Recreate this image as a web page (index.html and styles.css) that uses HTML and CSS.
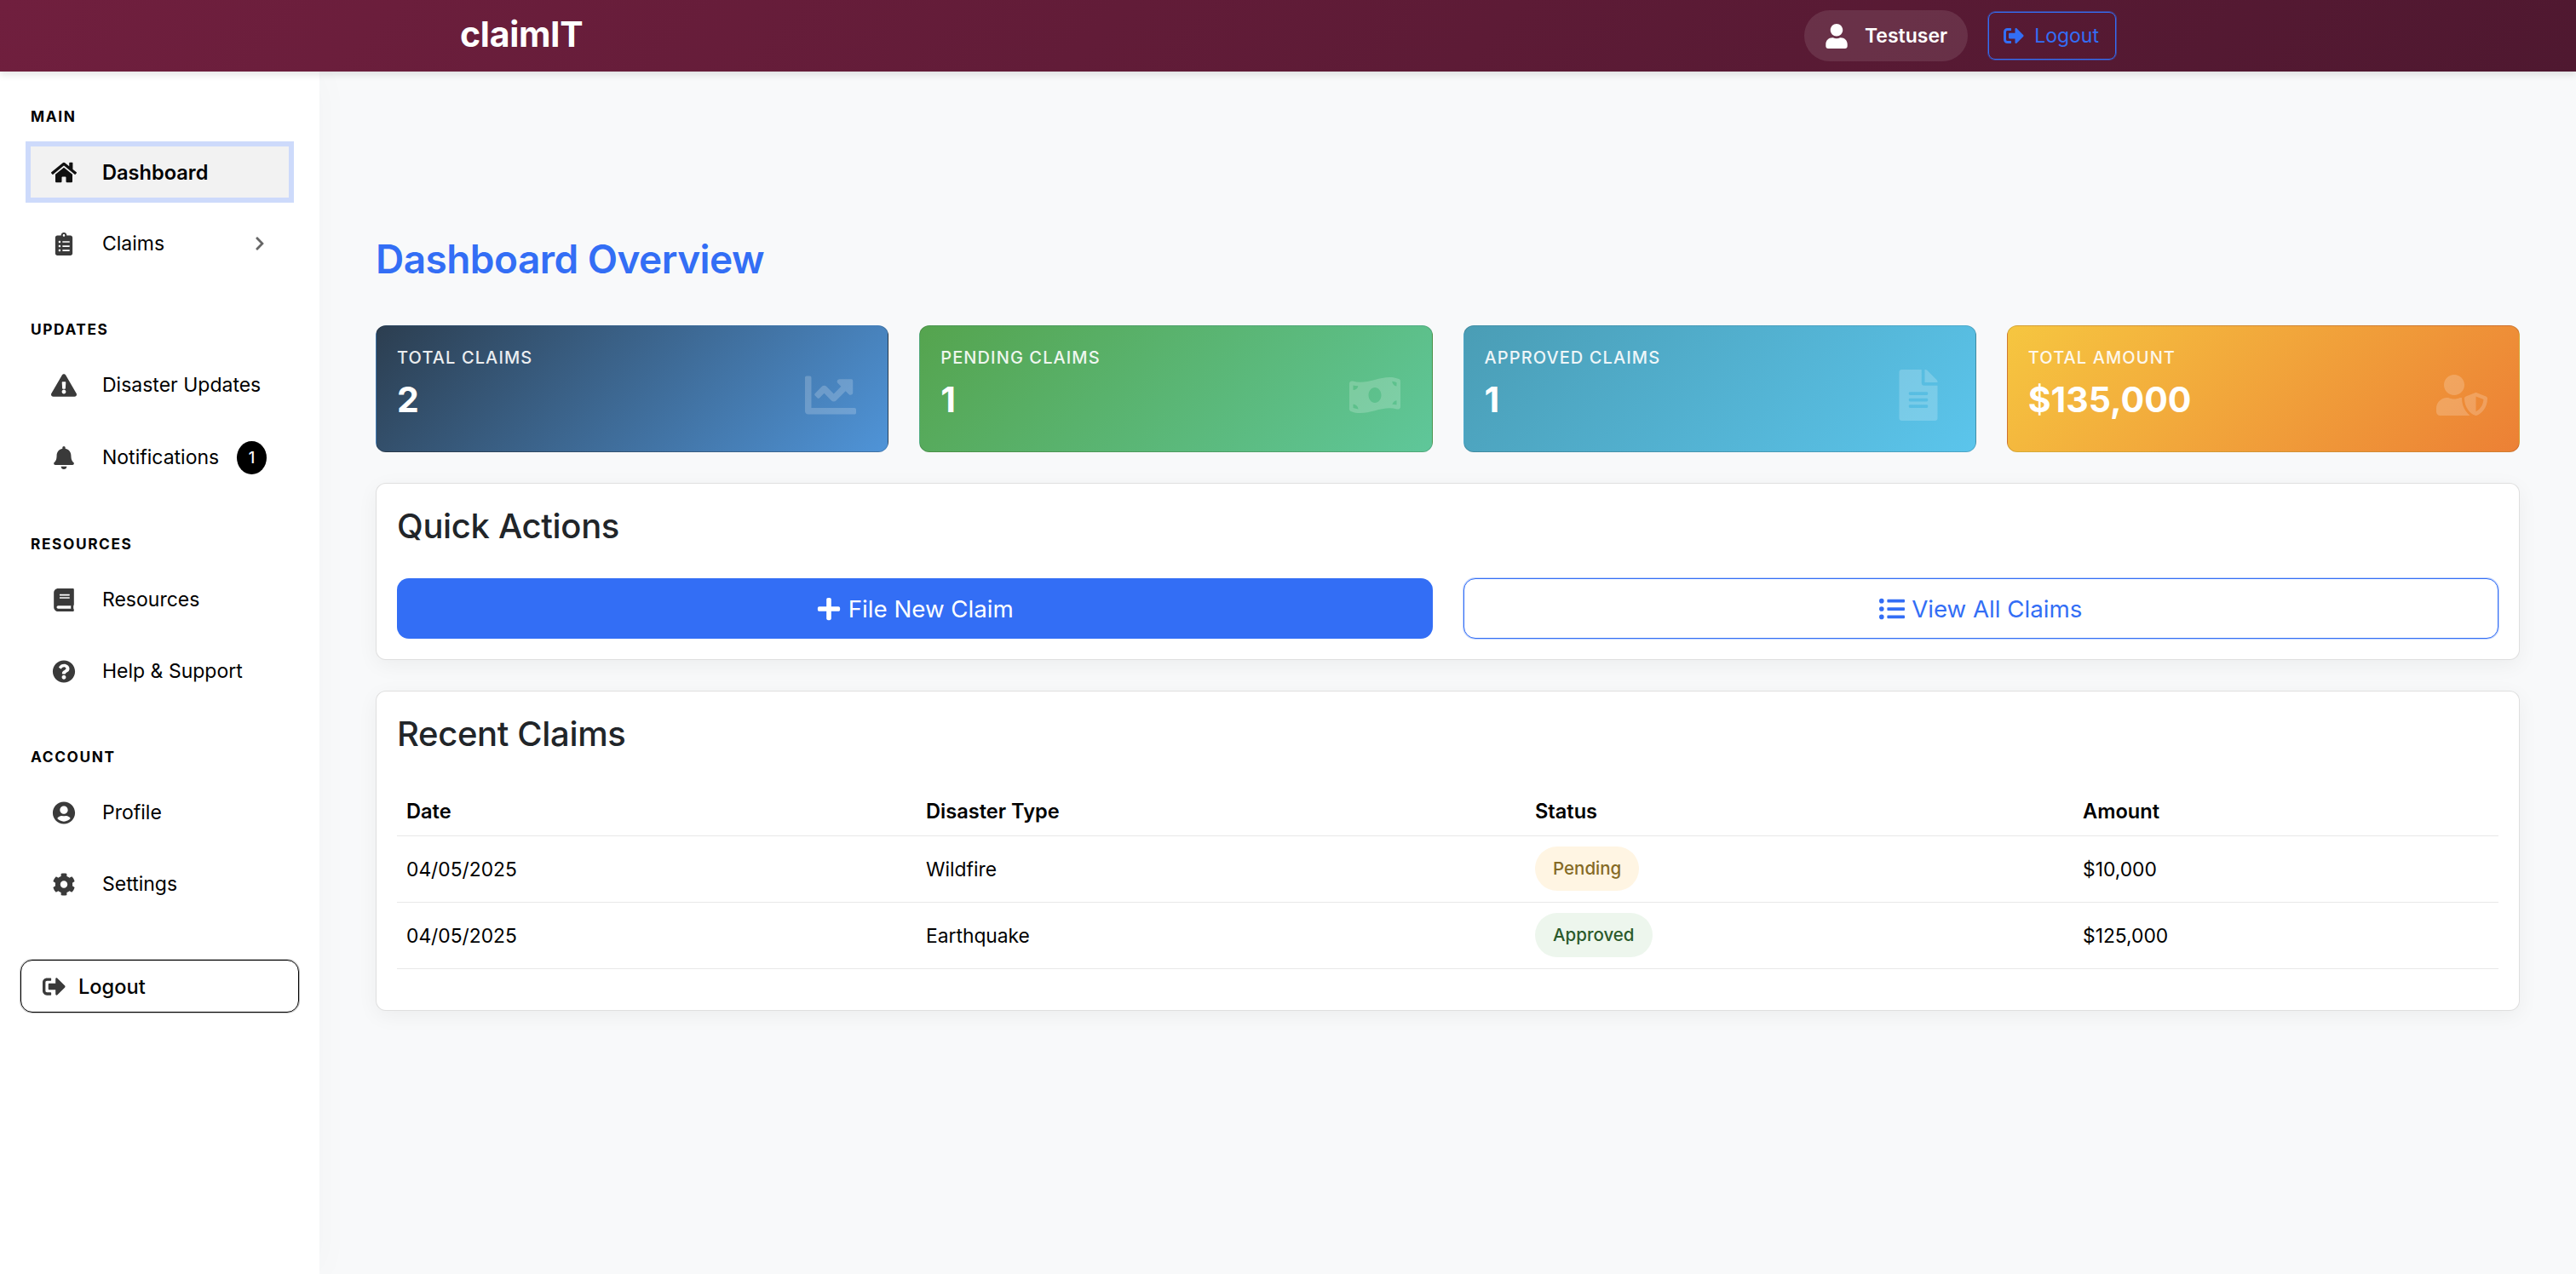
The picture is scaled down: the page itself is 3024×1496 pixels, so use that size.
FILE: index.html
```html
<!DOCTYPE html>
<html lang="en">
<head>
<meta charset="UTF-8">
<meta name="viewport" content="width=device-width, initial-scale=1.0">
<title>claimIT - Dashboard</title>
<link rel="stylesheet" href="styles.css">
</head>
<body>

<header class="topbar">
    <a class="brand">claimIT</a>
    <div class="topbar-right">
        <div class="user-pill">
            <svg class="user-icon" viewBox="0 0 448 512"><path d="M224 256c70.7 0 128-57.3 128-128S294.7 0 224 0 96 57.3 96 128s57.3 128 128 128zm89.6 32h-16.7c-22.2 10.2-46.9 16-72.9 16s-50.6-5.8-72.9-16h-16.7C60.2 288 0 348.2 0 422.4V464c0 26.5 21.5 48 48 48h352c26.5 0 48-21.5 48-48v-41.6c0-74.2-60.2-134.4-134.4-134.4z"/></svg>
            <span>Testuser</span>
        </div>
        <a class="top-logout">
            <svg class="top-logout-icon" viewBox="0 0 512 512"><path d="M497 273L329 441c-15 15-41 4.5-41-17v-96H152c-13.3 0-24-10.7-24-24v-96c0-13.3 10.7-24 24-24h136V88c0-21.4 25.9-32 41-17l168 168c9.3 9.4 9.3 24.6 0 34zM192 436v-40c0-6.6-5.4-12-12-12H96c-17.7 0-32-14.3-32-32V160c0-17.7 14.3-32 32-32h84c6.6 0 12-5.4 12-12V76c0-6.6-5.4-12-12-12H96c-53 0-96 43-96 96v192c0 53 43 96 96 96h84c6.6 0 12-5.4 12-12z"/></svg>
            <span>Logout</span>
        </a>
    </div>
</header>

<div class="layout">
    <aside class="sidebar">
        <section class="side-section">
            <h6 class="side-label">MAIN</h6>
            <a class="nav-item active">
                <svg class="nav-icon" viewBox="0 0 576 512"><path d="M280.37 148.26L96 300.11V464a16 16 0 0 0 16 16l112.06-.29a16 16 0 0 0 15.92-16V368a16 16 0 0 1 16-16h64a16 16 0 0 1 16 16v95.64a16 16 0 0 0 16 16.05L464 480a16 16 0 0 0 16-16V300L295.67 148.26a12.19 12.19 0 0 0-15.3 0zM571.6 251.47L488 182.56V44.05a12 12 0 0 0-12-12h-56a12 12 0 0 0-12 12v72.61L318.47 43a48 48 0 0 0-61 0L4.34 251.47a12 12 0 0 0-1.6 16.9l25.5 31A12 12 0 0 0 45.15 301l235.22-193.74a12.19 12.19 0 0 1 15.3 0L530.9 301a12 12 0 0 0 16.9-1.6l25.5-31a12 12 0 0 0-1.7-16.93z"/></svg>
                <span>Dashboard</span>
            </a>
            <a class="nav-item">
                <svg class="nav-icon" viewBox="0 0 384 512"><path d="M336 64h-80c0-35.3-28.7-64-64-64s-64 28.7-64 64H48C21.5 64 0 85.5 0 112v352c0 26.5 21.5 48 48 48h288c26.5 0 48-21.5 48-48V112c0-26.5-21.5-48-48-48zM96 424c-13.3 0-24-10.7-24-24s10.7-24 24-24 24 10.7 24 24-10.7 24-24 24zm0-96c-13.3 0-24-10.7-24-24s10.7-24 24-24 24 10.7 24 24-10.7 24-24 24zm0-96c-13.3 0-24-10.7-24-24s10.7-24 24-24 24 10.7 24 24-10.7 24-24 24zm96-192c13.3 0 24 10.7 24 24s-10.7 24-24 24-24-10.7-24-24 10.7-24 24-24zm128 368c0 4.4-3.6 8-8 8H168c-4.4 0-8-3.6-8-8v-16c0-4.4 3.6-8 8-8h144c4.4 0 8 3.6 8 8v16zm0-96c0 4.4-3.6 8-8 8H168c-4.4 0-8-3.6-8-8v-16c0-4.4 3.6-8 8-8h144c4.4 0 8 3.6 8 8v16zm0-96c0 4.4-3.6 8-8 8H168c-4.4 0-8-3.6-8-8v-16c0-4.4 3.6-8 8-8h144c4.4 0 8 3.6 8 8v16z"/></svg>
                <span>Claims</span>
                <svg class="chevron" viewBox="0 0 320 512"><path d="M285.476 272.971L91.132 467.314c-9.373 9.373-24.569 9.373-33.941 0l-22.667-22.667c-9.357-9.357-9.375-24.522-.04-33.901L188.505 256 34.484 101.255c-9.335-9.379-9.317-24.544.04-33.901l22.667-22.667c9.373-9.373 24.569-9.373 33.941 0L285.475 239.03c9.373 9.372 9.373 24.568.001 33.941z"/></svg>
            </a>
        </section>

        <section class="side-section">
            <h6 class="side-label">UPDATES</h6>
            <a class="nav-item">
                <svg class="nav-icon" viewBox="0 0 576 512"><path d="M569.517 440.013C587.975 472.007 564.806 512 527.94 512H48.054c-36.937 0-59.999-40.055-41.577-71.987L246.423 23.985c18.467-32.009 64.72-31.951 83.154 0l239.94 416.028zM288 354c-25.405 0-46 20.595-46 46s20.595 46 46 46 46-20.595 46-46-20.595-46-46-46zm-43.673-165.346l7.418 136c.347 6.364 5.609 11.346 11.982 11.346h48.546c6.373 0 11.635-4.982 11.982-11.346l7.418-136c.375-6.874-5.098-12.654-11.982-12.654h-63.383c-6.884 0-12.356 5.78-11.981 12.654z"/></svg>
                <span>Disaster Updates</span>
            </a>
            <a class="nav-item nav-item-badge">
                <svg class="nav-icon" viewBox="0 0 448 512"><path d="M224 512c35.32 0 63.97-28.65 63.97-64H160.03c0 35.35 28.65 64 63.97 64zm215.39-149.71c-19.32-20.76-55.47-51.99-55.47-154.29 0-77.7-54.48-139.9-127.94-155.16V32c0-17.67-14.32-32-31.98-32s-31.98 14.33-31.98 32v20.84C118.56 68.1 64.08 130.3 64.08 208c0 102.3-36.15 133.53-55.47 154.29-6 6.45-8.66 14.16-8.61 21.71.11 16.4 12.98 32 32.1 32h383.8c19.12 0 32-15.6 32.1-32 .05-7.55-2.61-15.27-8.61-21.71z"/></svg>
                <span>Notifications</span>
                <span class="nav-badge">1</span>
            </a>
        </section>

        <section class="side-section">
            <h6 class="side-label">RESOURCES</h6>
            <a class="nav-item">
                <svg class="nav-icon" viewBox="0 0 448 512"><path d="M448 360V24c0-13.3-10.7-24-24-24H96C43 0 0 43 0 96v320c0 53 43 96 96 96h328c13.3 0 24-10.7 24-24v-16c0-7.5-3.5-14.3-8.9-18.7-4.2-15.4-4.2-59.3 0-74.7 5.4-4.3 8.9-11.1 8.9-18.6zM128 134c0-3.3 2.7-6 6-6h212c3.3 0 6 2.7 6 6v20c0 3.3-2.7 6-6 6H134c-3.3 0-6-2.7-6-6v-20zm0 64c0-3.3 2.7-6 6-6h212c3.3 0 6 2.7 6 6v20c0 3.3-2.7 6-6 6H134c-3.3 0-6-2.7-6-6v-20zm253.4 250H96c-17.7 0-32-14.3-32-32 0-17.6 14.4-32 32-32h285.4c-1.9 17.1-1.9 46.9 0 64z"/></svg>
                <span>Resources</span>
            </a>
            <a class="nav-item">
                <svg class="nav-icon" viewBox="0 0 512 512"><path d="M504 256c0 136.997-111.043 248-248 248S8 392.997 8 256C8 119.083 119.043 8 256 8s248 111.083 248 248zM262.655 90c-54.497 0-89.255 22.957-116.549 63.758-3.536 5.286-2.353 12.415 2.715 16.258l34.699 26.31c5.205 3.947 12.621 3.008 16.665-2.122 17.864-22.658 30.113-35.797 57.303-35.797 20.429 0 45.698 13.148 45.698 32.958 0 14.976-12.363 22.667-32.534 33.976C247.128 238.528 216 254.941 216 296v4c0 6.627 5.373 12 12 12h56c6.627 0 12-5.373 12-12v-1.333c0-28.462 83.186-29.647 83.186-106.667 0-58.002-60.165-102-116.531-102zM256 338c-25.365 0-46 20.635-46 46 0 25.364 20.635 46 46 46s46-20.636 46-46c0-25.365-20.635-46-46-46z"/></svg>
                <span>Help &amp; Support</span>
            </a>
        </section>

        <section class="side-section">
            <h6 class="side-label">ACCOUNT</h6>
            <a class="nav-item">
                <svg class="nav-icon" viewBox="0 0 496 512"><path d="M248 8C111 8 0 119 0 256s111 248 248 248 248-111 248-248S385 8 248 8zm0 96c48.6 0 88 39.4 88 88s-39.4 88-88 88-88-39.4-88-88 39.4-88 88-88zm0 344c-58.7 0-111.3-26.6-146.5-68.2 18.8-35.4 55.6-59.8 98.5-59.8 2.4 0 4.8.4 7.1 1.1 13 4.2 26.6 6.9 40.9 6.9 14.3 0 28-2.7 40.9-6.9 2.3-.7 4.7-1.1 7.1-1.1 42.9 0 79.7 24.4 98.5 59.8C359.3 421.4 306.7 448 248 448z"/></svg>
                <span>Profile</span>
            </a>
            <a class="nav-item">
                <svg class="nav-icon" viewBox="0 0 512 512"><path d="M487.4 315.7l-42.6-24.6c4.3-23.2 4.3-47 0-70.2l42.6-24.6c4.9-2.8 7.1-8.6 5.5-14-11.1-35.6-30-67.8-54.7-94.6-3.8-4.1-10-5.1-14.8-2.3L380.8 110c-17.9-15.4-38.5-27.3-60.8-35.1V25.8c0-5.6-3.9-10.5-9.4-11.7-36.7-8.2-74.3-7.8-109.2 0-5.5 1.2-9.4 6.1-9.4 11.7V75c-22.2 7.9-42.8 19.8-60.8 35.1L88.7 85.5c-4.9-2.8-11-1.9-14.8 2.3-24.7 26.7-43.6 58.9-54.7 94.6-1.7 5.4.6 11.2 5.5 14L67.3 221c-4.3 23.2-4.3 47 0 70.2l-42.6 24.6c-4.9 2.8-7.1 8.6-5.5 14 11.1 35.6 30 67.8 54.7 94.6 3.8 4.1 10 5.1 14.8 2.3l42.6-24.6c17.9 15.4 38.5 27.3 60.8 35.1v49.2c0 5.6 3.9 10.5 9.4 11.7 36.7 8.2 74.3 7.8 109.2 0 5.5-1.2 9.4-6.1 9.4-11.7v-49.2c22.2-7.9 42.8-19.8 60.8-35.1l42.6 24.6c4.9 2.8 11 1.9 14.8-2.3 24.7-26.7 43.6-58.9 54.7-94.6 1.5-5.5-.7-11.3-5.6-14.1zM256 336c-44.1 0-80-35.9-80-80s35.9-80 80-80 80 35.9 80 80-35.9 80-80 80z"/></svg>
                <span>Settings</span>
            </a>
        </section>

        <a class="side-logout">
            <svg class="side-logout-icon" viewBox="0 0 512 512"><path d="M497 273L329 441c-15 15-41 4.5-41-17v-96H152c-13.3 0-24-10.7-24-24v-96c0-13.3 10.7-24 24-24h136V88c0-21.4 25.9-32 41-17l168 168c9.3 9.4 9.3 24.6 0 34zM192 436v-40c0-6.6-5.4-12-12-12H96c-17.7 0-32-14.3-32-32V160c0-17.7 14.3-32 32-32h84c6.6 0 12-5.4 12-12V76c0-6.6-5.4-12-12-12H96c-53 0-96 43-96 96v192c0 53 43 96 96 96h84c6.6 0 12-5.4 12-12z"/></svg>
            <span>Logout</span>
        </a>
    </aside>

    <main class="content">
        <h2 class="page-title">Dashboard Overview</h2>

        <div class="stats">
            <div class="stat-card stat-blue">
                <div class="stat-label">TOTAL CLAIMS</div>
                <div class="stat-value">2</div>
                <svg class="stat-icon" viewBox="0 0 512 512"><path d="M496 384H64V80c0-8.84-7.16-16-16-16H16C7.16 64 0 71.16 0 80v336c0 17.67 14.33 32 32 32h464c8.84 0 16-7.16 16-16v-32c0-8.84-7.16-16-16-16zM464 96H345.94c-21.38 0-32.09 25.85-16.97 40.97l32.4 32.4L288 242.75l-73.37-73.37c-12.5-12.5-32.76-12.5-45.25 0l-68.69 68.69c-6.25 6.25-6.25 16.38 0 22.63l22.62 22.62c6.25 6.25 16.38 6.25 22.63 0L192 237.25l73.37 73.37c12.5 12.5 32.76 12.5 45.25 0l96-96 32.4 32.4c15.12 15.12 40.97 4.41 40.97-16.97V112c.01-8.84-7.15-16-15.99-16z"/></svg>
            </div>
            <div class="stat-card stat-green">
                <div class="stat-label">PENDING CLAIMS</div>
                <div class="stat-value">1</div>
                <svg class="stat-icon" viewBox="0 0 640 512"><path d="M621.16 54.46C582.37 38.19 543.55 32 504.75 32c-123.17-.01-246.33 62.34-369.5 62.34-30.89 0-61.76-3.92-92.65-13.72-3.47-1.1-6.95-1.62-10.35-1.62C15.04 79 0 92.32 0 110.81v317.26c0 12.63 7.23 24.6 18.84 29.46C57.63 473.81 96.45 480 135.25 480c123.17 0 246.34-62.35 369.51-62.35 30.89 0 61.76 3.92 92.65 13.72 3.47 1.1 6.95 1.62 10.35 1.62 17.21 0 32.25-13.32 32.25-31.81V83.93c-.01-12.64-7.24-24.6-18.85-29.47zM48 132.22c20.12 5.04 41.12 7.57 62.72 8.93C104.84 170.54 79 192.69 48 192.69v-60.47zm0 285v-47.78c34.37 0 62.18 27.27 63.71 61.4-22.53-1.81-43.59-6.31-63.71-13.62zM320 352c-44.19 0-80-42.99-80-96 0-53.02 35.82-96 80-96s80 42.98 80 96c0 53.03-35.83 96-80 96zm272 27.78c-17.52-4.39-35.71-6.85-54.32-8.44 5.87-26.08 27.5-45.88 54.32-49.28v57.72zm0-236.11c-30.89-3.91-54.86-29.7-55.81-61.55 19.54 2.17 38.09 6.23 55.81 12.66v48.89z"/></svg>
            </div>
            <div class="stat-card stat-cyan">
                <div class="stat-label">APPROVED CLAIMS</div>
                <div class="stat-value">1</div>
                <svg class="stat-icon" viewBox="0 0 384 512"><path d="M224 136V0H24C10.7 0 0 10.7 0 24v464c0 13.3 10.7 24 24 24h336c13.3 0 24-10.7 24-24V160H248c-13.2 0-24-10.8-24-24zm64 236c0 6.6-5.4 12-12 12H108c-6.6 0-12-5.4-12-12v-8c0-6.6 5.4-12 12-12h168c6.6 0 12 5.4 12 12v8zm0-64c0 6.6-5.4 12-12 12H108c-6.6 0-12-5.4-12-12v-8c0-6.6 5.4-12 12-12h168c6.6 0 12 5.4 12 12v8zm0-72v8c0 6.6-5.4 12-12 12H108c-6.6 0-12-5.4-12-12v-8c0-6.6 5.4-12 12-12h168c6.6 0 12 5.4 12 12zm96-114.1v6.1H256V0h6.1c6.4 0 12.5 2.5 17 7l97.9 98c4.5 4.5 7 10.6 7 16.9z"/></svg>
            </div>
            <div class="stat-card stat-orange">
                <div class="stat-label">TOTAL AMOUNT</div>
                <div class="stat-value">$135,000</div>
                <svg class="stat-icon" viewBox="0 0 640 512"><path d="M622.3 271.1l-115.2-45c-4.1-1.6-12.6-3.7-22.2 0l-115.2 45c-10.7 4.2-17.7 14-17.7 24.9 0 111.6 68.7 188.8 132.9 213.9 9.6 3.7 18 1.6 22.2 0C558.4 489.9 640 420.5 640 296c0-10.9-7-20.7-17.7-24.9zM496 462.4V273.3l95.5 37.3c-5.6 87.1-60.4 135.6-95.5 151.8zM224 256c70.7 0 128-57.3 128-128S294.7 0 224 0 96 57.3 96 128s57.3 128 128 128zm96 40c0-2.5.8-4.8 1.1-7.2-2.5-.1-4.9-.8-7.5-.8h-16.7c-22.2 10.2-46.9 16-72.9 16s-50.6-5.8-72.9-16h-16.7C60.2 288 0 348.2 0 422.4V464c0 26.5 21.5 48 48 48h352c6.8 0 13.3-1.5 19.2-4-54-42.9-99.2-116.7-99.2-212z"/></svg>
            </div>
        </div>

        <section class="panel">
            <h4 class="panel-title">Quick Actions</h4>
            <div class="actions">
                <a class="action-btn action-primary">
                    <svg class="action-icon" viewBox="0 0 448 512"><path d="M416 208H272V64c0-17.67-14.33-32-32-32h-32c-17.67 0-32 14.33-32 32v144H32c-17.67 0-32 14.33-32 32v32c0 17.67 14.33 32 32 32h144v144c0 17.67 14.33 32 32 32h32c17.67 0 32-14.33 32-32V304h144c17.67 0 32-14.33 32-32v-32c0-17.67-14.33-32-32-32z"/></svg>
                    <span>File New Claim</span>
                </a>
                <a class="action-btn action-outline">
                    <svg class="action-icon" viewBox="0 0 512 512"><path d="M48 48a48 48 0 1 0 48 48 48 48 0 0 0-48-48zm0 160a48 48 0 1 0 48 48 48 48 0 0 0-48-48zm0 160a48 48 0 1 0 48 48 48 48 0 0 0-48-48zm448 16H176a16 16 0 0 0-16 16v32a16 16 0 0 0 16 16h320a16 16 0 0 0 16-16v-32a16 16 0 0 0-16-16zm0-320H176a16 16 0 0 0-16 16v32a16 16 0 0 0 16 16h320a16 16 0 0 0 16-16V80a16 16 0 0 0-16-16zm0 160H176a16 16 0 0 0-16 16v32a16 16 0 0 0 16 16h320a16 16 0 0 0 16-16v-32a16 16 0 0 0-16-16z"/></svg>
                    <span>View All Claims</span>
                </a>
            </div>
        </section>

        <section class="panel panel-recent">
            <h4 class="panel-title">Recent Claims</h4>
            <table class="claims-table">
                <thead>
                    <tr>
                        <th class="col-date">Date</th>
                        <th class="col-type">Disaster Type</th>
                        <th class="col-status">Status</th>
                        <th>Amount</th>
                    </tr>
                </thead>
                <tbody>
                    <tr>
                        <td>04/05/2025</td>
                        <td>Wildfire</td>
                        <td><span class="badge badge-pending">Pending</span></td>
                        <td>$10,000</td>
                    </tr>
                    <tr>
                        <td>04/05/2025</td>
                        <td>Earthquake</td>
                        <td><span class="badge badge-approved">Approved</span></td>
                        <td>$125,000</td>
                    </tr>
                </tbody>
            </table>
        </section>
    </main>
</div>

</body>
</html>
```

FILE: styles.css
```css
* {
    box-sizing: border-box;
}
html, body {
    height: 100%;
}
body {
    margin: 0;
    font-family: Inter, "Liberation Sans", sans-serif;
    font-size: 23px;
    color: #000;
    background-color: #f8f9fa;
    overflow: hidden;
}
svg {
    display: block;
    fill: currentColor;
    flex-shrink: 0;
}

/* top bar */
.topbar {
    position: relative;
    z-index: 2;
    height: 84px;
    padding: 0 540px;
    display: flex;
    align-items: center;
    justify-content: space-between;
    color: #fff;
    background: linear-gradient(135deg, #701f3e 0%, #4f1830 100%);
    box-shadow: 0 4px 8px rgba(0,0,0,0.1);
}
.brand {
    margin-bottom: 4px;
    font-size: 41px;
    font-weight: 700;
    letter-spacing: -0.3px;
}
.topbar-right {
    display: flex;
    align-items: center;
    gap: 24px;
}
.user-pill {
    height: 60px;
    padding: 0 24px 0 25px;
    display: flex;
    align-items: center;
    gap: 20px;
    font-size: 23px;
    font-weight: 600;
    border-radius: 30px;
    background-color: rgba(255,255,255,0.1);
}
.user-icon {
    width: 26px;
    height: 29px;
}
.top-logout {
    height: 56px;
    padding: 0 19px 0 17px;
    display: flex;
    align-items: center;
    gap: 12px;
    font-size: 23px;
    color: #336ef5;
    border: 1px solid #336ef5;
    border-radius: 8px;
    box-shadow: 0 0 0 1px rgba(51,110,245,0.45);
}
.top-logout-icon {
    width: 24px;
    height: 24px;
}

/* sidebar */
.layout {
    display: flex;
    height: 1412px;
}
.sidebar {
    position: relative;
    z-index: 1;
    width: 375px;
    padding: 40px 24px 0 36px;
    background-color: #fff;
    box-shadow: 4px 0 40px rgba(0,0,0,0.025);
}
.side-section {
    margin-bottom: 58px;
}
.side-label {
    margin: 0 0 22px;
    font-size: 17.3px;
    line-height: 26px;
    font-weight: 700;
    letter-spacing: 1.6px;
}
.nav-item {
    width: 303px;
    height: 60px;
    margin-bottom: 24px;
    padding: 0 26px 0 24px;
    display: flex;
    align-items: center;
    gap: 30px;
    font-size: 23px;
}
.nav-item-badge {
    height: 62px;
}
.nav-item.active {
    font-size: 23.6px;
    font-weight: 600;
    background-color: #f2f2f2;
    box-shadow: 0 0 0 6px #cddafb;
}
.nav-icon {
    width: 30px;
    height: 27px;
    color: #3a3a3a;
}
.active .nav-icon {
    color: #111;
}
.chevron {
    width: 16px;
    height: 18px;
    margin-left: auto;
    color: #666;
}
.nav-badge {
    width: 37px;
    height: 39px;
    margin-left: -9px;
    display: flex;
    align-items: center;
    justify-content: center;
    font-size: 18px;
    font-weight: 500;
    color: #fff;
    background-color: #000;
    border-radius: 50%;
}
.side-logout {
    width: 327px;
    height: 62px;
    margin: 59px 0 0 -12px;
    padding-left: 25px;
    display: flex;
    align-items: center;
    gap: 15px;
    font-size: 23.6px;
    font-weight: 500;
    border: 1px solid #000;
    border-radius: 14px;
    box-shadow: 0 0 0 1px rgba(0,0,0,0.25);
}
.side-logout-icon {
    width: 27px;
    height: 27px;
    color: #3a3a3a;
}

/* main area */
.content {
    flex: 1;
    padding: 193px 66px 0;
}
.page-title {
    margin: 0 0 50px;
    font-size: 46px;
    line-height: 55px;
    font-weight: 600;
    letter-spacing: -0.55px;
    color: #336ef5;
}
.stats {
    display: grid;
    grid-template-columns: repeat(4, 1fr);
    gap: 36px;
    margin-bottom: 36px;
}
.stat-card {
    position: relative;
    height: 149px;
    padding: 25px 24px;
    color: #fff;
    border: 1px solid rgba(0,0,0,0.125);
    border-radius: 12px;
}
.stat-blue {
    background: linear-gradient(135deg, #2c3e50 0%, #4f94d8 100%);
}
.stat-green {
    background: linear-gradient(135deg, #55a44e 0%, #5fc79a 100%);
}
.stat-cyan {
    background: linear-gradient(135deg, #4a9db5 0%, #5bc5ec 100%);
}
.stat-orange {
    background: linear-gradient(135deg, #f6c640 0%, #ec8035 100%);
}
.stat-label {
    font-size: 20px;
    line-height: 24px;
    font-weight: 500;
    letter-spacing: 1.1px;
    opacity: 0.9;
}
.stat-value {
    margin-top: 11px;
    font-size: 41px;
    line-height: 52px;
    font-weight: 700;
}
.stat-icon {
    position: absolute;
    top: 51px;
    right: 37px;
    width: 60px;
    height: 60px;
    opacity: 0.2;
}

/* panels */
.panel {
    margin-bottom: 36px;
    padding: 24px;
    background-color: #fff;
    border: 1px solid rgba(0,0,0,0.125);
    border-radius: 12px;
    box-shadow: 0 6px 24px rgba(0,0,0,0.05);
}
.panel-title {
    margin: 0 0 35px;
    font-size: 40px;
    line-height: 52px;
    font-weight: 500;
    letter-spacing: -0.35px;
    color: #212529;
}
.actions {
    display: grid;
    grid-template-columns: 1fr 1fr;
    gap: 36px;
}
.action-btn {
    height: 71px;
    display: flex;
    align-items: center;
    justify-content: center;
    gap: 8px;
    font-size: 27.7px;
    border-radius: 14px;
}
.action-primary {
    color: #fff;
    background-color: #336ef5;
}
.action-outline {
    color: #336ef5;
    background-color: #fff;
    border: 1px solid #336ef5;
    box-shadow: 0 0 0 1px rgba(51,110,245,0.3);
}
.action-icon {
    width: 30px;
    height: 30px;
}
.panel-recent {
    padding-bottom: 48px;
}
.panel-recent .panel-title {
    margin-bottom: 36px;
}

/* table */
.claims-table {
    width: 100%;
    border-collapse: collapse;
    font-size: 22.8px;
}
.claims-table th {
    height: 57px;
    padding: 0 11px;
    text-align: left;
    font-size: 23.6px;
    font-weight: 600;
    border-bottom: 1px solid #e8e8e8;
}
.claims-table td {
    height: 78px;
    padding: 0 11px;
    border-bottom: 1px solid #e8e8e8;
}
.col-date {
    width: 610px;
}
.col-type {
    width: 715px;
}
.col-status {
    width: 643px;
}
.badge {
    display: inline-block;
    padding: 0 21px;
    height: 52px;
    line-height: 52px;
    font-size: 20.5px;
    font-weight: 500;
    border-radius: 26px;
    vertical-align: middle;
}
.badge-pending {
    color: #856a25;
    background-color: #fff5e3;
}
.badge-approved {
    color: #2b5a2b;
    background-color: #edf6ed;
}
```
